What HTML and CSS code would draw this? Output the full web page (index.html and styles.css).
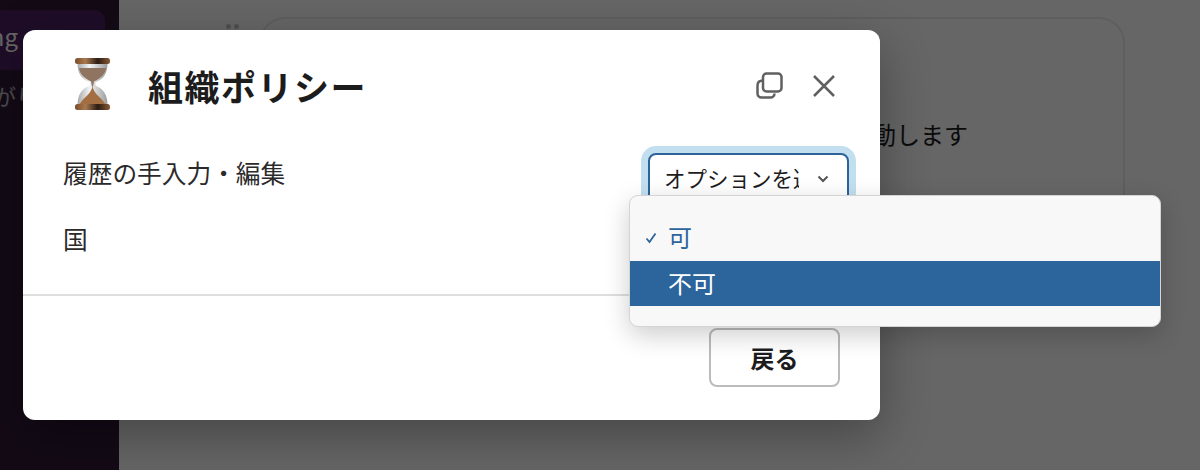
FILE: index.html
```html
<!DOCTYPE html>
<html lang="ja">
<head>
  <meta charset="UTF-8" />
  <title>組織ポリシー</title>
  <link rel="stylesheet" href="styles.css">
</head>
<body>
  <div class="app">
    <div class="sidebar">
      <div class="side-item">Posting</div>
      <div class="side-text">つながり</div>
    </div>
    <div class="main">
      <div class="handle"><i></i><i></i></div>
      <div class="card">ワークフローを起動します</div>
    </div>
  </div>

  <div class="overlay">
    <div class="modal">
      <div class="modal-head">
        <svg class="hourglass" viewBox="0 0 35 52" aria-hidden="true">
          <defs>
            <linearGradient id="wood" x1="0" x2="1" y1="0" y2="0">
              <stop offset="0" stop-color="#7a4d2b" />
              <stop offset="0.3" stop-color="#a9794f" />
              <stop offset="0.65" stop-color="#2b1c14" />
              <stop offset="1" stop-color="#8a5a34" />
            </linearGradient>
            <linearGradient id="glass" x1="0" x2="1" y1="0" y2="0">
              <stop offset="0" stop-color="#a8a8a8" />
              <stop offset="0.4" stop-color="#f2f4f5" />
              <stop offset="1" stop-color="#9c9c9c" />
            </linearGradient>
          </defs>
          <path d="M2.500 5h30c0 11-4 16-12 19.500v3c8 3.500 12 9.500 12 19.500h-30c0-10 4-16 12-19.500v-3C6.500 21 2.500 16 2.500 5z" fill="url(#glass)" />
          <path d="M4 10h27c-1 6-5 10-12 13.500l-1 5h-1l-1-5C9 20 5 16 4 10z" fill="#8f7462" />
          <path d="M17.500 28c1 8 8 10 13.500 19H4c5.500-9 12.500-11 13.500-19z" fill="#a36e42" />
          <rect x="0" y="0" width="35" height="6" rx="2.500" fill="url(#wood)" />
          <rect x="0" y="46" width="35" height="6" rx="2.500" fill="url(#wood)" />
        </svg>
        <h1>組織ポリシー</h1>
        <div class="head-icons">
          <svg class="icon-copy" viewBox="0 0 27 27" aria-hidden="true">
            <rect x="7" y="1.500" width="18.500" height="18" rx="3.500" />
            <path d="M7 8.500C3.500 8.500 1.500 10.500 1.500 13.500V21.500a4 4 0 0 0 4 4H14.500a4 4 0 0 0 4-4" />
          </svg>
          <svg class="icon-close" viewBox="0 0 22 22" aria-hidden="true">
            <path d="M1 1l20 20M21 1L1 21" />
          </svg>
        </div>
      </div>

      <div class="row">
        <span class="row-label">履歴の手入力・編集</span>
        <div class="select">
          <span class="select-text">オプションを選択</span>
          <svg class="chevron" viewBox="0 0 12 8" aria-hidden="true"><path d="M1.500 1.500L6 6l4.500-4.500" /></svg>
          <div class="menu">
            <div class="menu-item checked">
              <svg class="check" viewBox="0 0 12 12" aria-hidden="true"><path d="M1.500 6.500L4.500 10l6-8.500" /></svg>
              可
            </div>
            <div class="menu-item active">不可</div>
          </div>
        </div>
      </div>
      <div class="row row-second">
        <span class="row-label">国</span>
      </div>

      <div class="modal-foot">
        <button class="back-btn">戻る</button>
      </div>
    </div>
  </div>
</body>
</html>
```

FILE: styles.css
```css
* {
  box-sizing: border-box;
}

body {
  margin: 0;
  height: 470px;
  overflow: hidden;
  font-family: "Noto Sans CJK JP", "Noto Sans", sans-serif;
  color: #1d1c1d;
}

.app {
  display: flex;
  height: 470px;
}

.sidebar {
  width: 119px;
  background: #301b37;
  color: #fff;
  padding-top: 10px;
  overflow: hidden;
}

.side-item {
  width: 105px;
  height: 60px;
  background: #4e2164;
  border-radius: 0 10px 10px 0;
  font-size: 24px;
  line-height: 52px;
  text-align: right;
  padding-right: 87px;
  white-space: nowrap;
  direction: rtl;
}

.side-text {
  font-size: 22px;
  line-height: 30px;
  margin-top: 10px;
  margin-left: -50px;
  white-space: nowrap;
  opacity: 0.7;
}

.main {
  flex: 1;
  display: flex;
  padding: 17px 75px 0 107px;
  background: #fff;
}

.handle {
  display: flex;
  gap: 3px;
  width: 33px;
  flex-shrink: 0;
  padding-top: 7px;
}

.handle i {
  width: 5px;
  height: 5px;
  border-radius: 50%;
  background: #c8c8c8;
}

.card {
  flex: 1;
  height: 250px;
  border: 2px solid #ececec;
  border-radius: 26px;
  padding: 97px 155px 0 0;
  text-align: right;
  font-size: 24px;
  line-height: 36px;
  color: #1d1c1d;
}

.overlay {
  position: absolute;
  inset: 0;
  background: rgba(0, 0, 0, 0.6);
  padding: 30px 320px 50px 23px;
}

.modal {
  height: 390px;
  background: #fff;
  border-radius: 12px;
  box-shadow: 0 16px 50px rgba(0, 0, 0, 0.32);
  padding: 28px 0 33px;
}

.modal-head {
  display: flex;
  align-items: flex-start;
  height: 52px;
  padding: 0 45px 0 52px;
}

.hourglass {
  width: 35px;
  height: 52px;
}

.modal-head h1 {
  margin: 0 0 0 38px;
  font-size: 35px;
  line-height: 56px;
  letter-spacing: 1.500px;
  font-weight: 700;
  color: #1d1c1d;
}

.head-icons {
  margin-left: auto;
  display: flex;
  align-items: center;
  gap: 30px;
  padding-top: 14px;
}

.icon-copy,
.icon-close {
  fill: none;
  stroke: #616061;
  stroke-width: 2.500;
}

.icon-copy {
  width: 27px;
  height: 27px;
}

.icon-close {
  width: 22px;
  height: 22px;
}

.row {
  display: flex;
  justify-content: space-between;
  align-items: center;
  height: 46px;
  margin-top: 43px;
  padding: 0 31px 0 40px;
}

.row-second {
  margin-top: 18px;
}

.row-label {
  font-size: 24.700px;
  line-height: 36px;
  margin-top: -8px;
  color: #2b2a2b;
}

.row-second .row-label {
  margin-top: -4px;
}

.select {
  position: relative;
  display: flex;
  align-items: center;
  width: 201px;
  height: 50px;
  margin-top: 4px;
  padding: 0 18px 2px 14px;
  background: #fff;
  border: 2px solid #2c6399;
  border-radius: 8px;
  box-shadow: 0 0 0 7px #c2dff0;
  font-size: 21.500px;
}

.select-text {
  width: 135px;
  overflow: hidden;
  white-space: nowrap;
}

.chevron {
  width: 12px;
  height: 8px;
  margin-left: auto;
  margin-top: 4px;
  fill: none;
  stroke: #555;
  stroke-width: 2;
}

.menu {
  position: absolute;
  left: -21px;
  top: 40px;
  width: 532px;
  height: 132px;
  padding: 19px 0;
  background: #f8f8f8;
  border: 1px solid #d4d4d4;
  border-radius: 9px;
  box-shadow: 0 8px 26px rgba(0, 0, 0, 0.2);
  overflow: hidden;
}

.menu-item {
  position: relative;
  height: 45.500px;
  padding-left: 38px;
  font-size: 24px;
  line-height: 44px;
}

.checked {
  color: #2c649c;
}

.check {
  position: absolute;
  left: 15px;
  top: 17px;
  width: 12px;
  height: 12px;
  fill: none;
  stroke: #2c649c;
  stroke-width: 1.800;
}

.active {
  background: #2c649c;
  color: #fff;
}

.modal-foot {
  margin-top: 31px;
  padding: 32px 40px 0 0;
  border-top: 2px solid #dedede;
  display: flex;
  justify-content: flex-end;
}

.back-btn {
  width: 131px;
  height: 59px;
  background: #fff;
  border: 2px solid #bbbbbb;
  border-radius: 8px;
  font-family: inherit;
  font-size: 24px;
  font-weight: 700;
  color: #1d1c1d;
}
```
